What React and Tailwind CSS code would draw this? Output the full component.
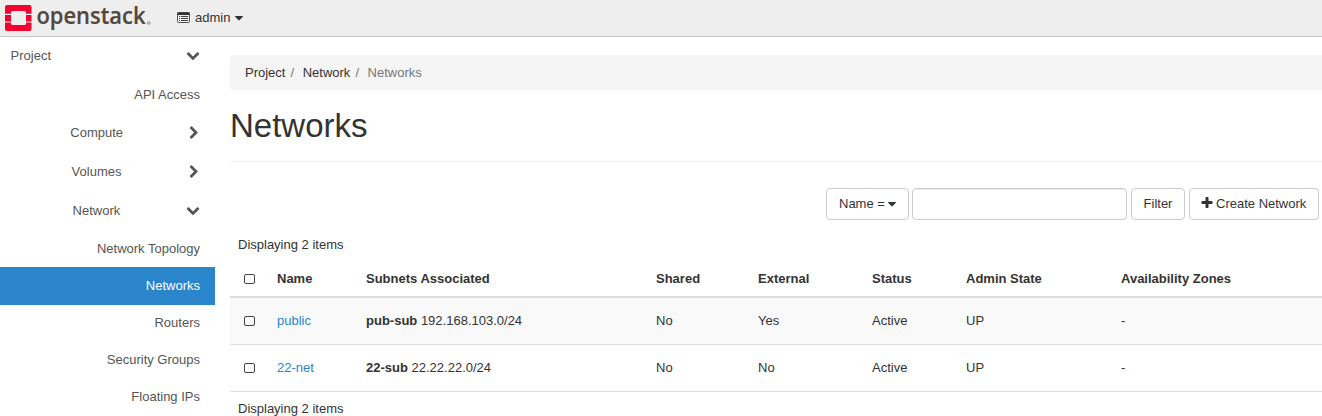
const FA = {
  down: "M1683 808l-742 741q-19 19-45 19t-45-19l-742-741q-19-19-19-45.5t19-45.5l166-165q19-19 45-19t45 19l531 531 531-531q19-19 45-19t45 19l166 165q19 19 19 45.5t-19 45.5z",
  right: "M1363 877l-742 742q-19 19-45 19t-45-19l-166-166q-19-19-19-45t19-45l531-531-531-531q-19-19-19-45t19-45l166-166q19-19 45-19t45 19l742 742q19 19 19 45t-19 45z",
  plus: "M1600 736v192q0 40-28 68t-68 28h-416v416q0 40-28 68t-68 28h-192q-40 0-68-28t-28-68v-416h-416q-40 0-68-28t-28-68v-192q0-40 28-68t68-28h416v-416q0-40 28-68t68-28h192q40 0 68 28t28 68v416h416q40 0 68 28t28 68z",
  caret: "M1408 704q0 26-19 45l-448 448q-19 19-45 19t-45-19l-448-448q-19-19-19-45t19-45 45-19h896q26 0 45 19t19 45z",
};

function Icon({ name, className = "" }) {
  return (
    <svg viewBox="0 0 1792 1792" fill="currentColor" className={`size-[14px] shrink-0 ${className}`}>
      <path d={FA[name]} />
    </svg>
  );
}

function Logo() {
  return (
    <svg width="150" height="36" viewBox="0 0 150 36" className="ml-[2px] shrink-0 overflow-visible">
      <g fill="#f5002f">
        <path d="M5 5h22.5a2 2 0 0 1 2 2v6.7h-5.5v-1.2a1.5 1.5 0 0 0-1.5-1.5h-12a1.5 1.5 0 0 0-1.5 1.5v1.2h-6v-6.7a2 2 0 0 1 2-2z" />
        <path d="M3 14.9h6v6.5h-6zM24 14.9h5.5v6.5h-5.5z" />
        <path d="M3 22.6h6v1a1.5 1.5 0 0 0 1.5 1.5h12a1.5 1.5 0 0 0 1.5-1.5v-1h5.5v6.4a2 2 0 0 1-2 2h-22.5a2 2 0 0 1-2-2z" />
      </g>
      <text x="34.5" y="24" textLength="109" lengthAdjust="spacingAndGlyphs" fill="#53483e" stroke="#53483e" strokeWidth=".2" className="font-['Open_Sans',sans-serif] text-[23.5px] font-semibold">openstack</text>
      <circle cx="146.8" cy="23" r="1.4" fill="#c4c0bd" stroke="#9b948e" strokeWidth=".7" />
    </svg>
  );
}

function ListIcon() {
  return (
    <svg width="13" height="11" viewBox="0 0 13 11" className="mb-px shrink-0">
      <path d="M1.4.5h10.2q.9 0 .9.9v8.2q0 .9-.9.9H1.400q-.9 0-.9-.9V1.400q0-.9.9-.9z" fill="none" stroke="#555" />
      <path d="M.5.5h12V3H.5z" fill="#333" />
      <path d="M2 4h1v1H2zM4 4h7v1H4zM2 6h1v1H2zM4 6h7v1H4zM2 8h1v1H2zM4 8h7v1H4z" fill="#444" />
    </svg>
  );
}

function Group({ label, icon, className }) {
  return (
    <div className={`flex items-center justify-between ${className}`}>
      <span>{label}</span>
      <Icon name={icon} className={icon === "down" ? "mr-[15px] mb-[2px]" : "mr-[14px]"} />
    </div>
  );
}

function Leaf({ label, className }) {
  return <div className={`flex items-center justify-end pr-[15px] ${className}`}>{label}</div>;
}

const Box = () => <span className="block h-[10px] w-[11px] rounded-[2px] border border-[#444]" />;

const columns = "grid grid-cols-[39px_89px_290px_102px_114px_94px_155px_1fr] items-center pl-2";

function Row({ name, subnet, cidr, external, className }) {
  return (
    <div className={`${columns} h-[47px] border-b border-[#ddd] ${className}`}>
      <span className="pl-[6px]"><Box /></span>
      <a className="text-[#2a85cb]">{name}</a>
      <span><b>{subnet}</b> {cidr}</span>
      <span>No</span>
      <span>{external}</span>
      <span>Active</span>
      <span>UP</span>
      <span>-</span>
    </div>
  );
}

const button = "flex h-8 items-center rounded-[4px] border border-[#ccc] bg-white";

export default function App() {
  return (
    <div className="flex h-[416px] w-[1322px] flex-col overflow-hidden bg-white font-['Liberation_Sans',Arial,sans-serif] text-[13px] leading-[18px] text-[#333]">
      <header className="flex h-[37px] shrink-0 items-center border-b border-[#c6c6c6] bg-[#eee]">
        <Logo />
        <div className="ml-[25px] flex items-center">
          <ListIcon />
          <span className="ml-[5px]">admin</span>
          <Icon name="caret" className="mb-px ml-[2px]" />
        </div>
      </header>
      <div className="flex min-h-0 flex-1">
        <nav className="w-[215px] shrink-0 text-[#555]">
          <Group label="Project" icon="down" className="h-[38px] pl-[10.6px]" />
          <Leaf label="API Access" className="h-[39px]" />
          <Group label="Compute" icon="right" className="h-[38px] pl-[70.3px]" />
          <Group label="Volumes" icon="right" className="h-[39px] pl-[71.6px]" />
          <Group label="Network" icon="down" className="h-[39px] pl-[72.6px]" />
          <Leaf label="Network Topology" className="h-[37px]" />
          <Leaf label="Networks" className="h-[38px] bg-[#2a85cb] text-white" />
          <Leaf label="Routers" className="h-[36px]" />
          <Leaf label="Security Groups" className="h-[38px]" />
          <Leaf label="Floating IPs" className="h-[36px]" />
        </nav>
        <main className="ml-[15px] flex-1 pt-[18px]">
          <div className="flex h-[35px] items-center rounded-l-[4px] bg-[#f5f5f5] pl-[15px]">
            <span>Project</span>
            <span className="ml-[5px] text-[#777]">/</span>
            <span className="ml-[8.6px]">Network</span>
            <span className="ml-[5px] text-[#777]">/</span>
            <span className="ml-[8.6px] text-[#777]">Networks</span>
          </div>
          <h1 className="h-[72px] border-b border-[#eee] pt-[18px] text-[33px] leading-[36px]">Networks</h1>
          <div className="mt-[26px] flex justify-end pr-[3px]">
            <div className={`${button} w-[83px] pl-3`}>
              Name =<Icon name="caret" className="mb-px" />
            </div>
            <input className="ml-[3px] h-8 w-[215px] rounded-[4px] border border-[#ccc] inset-shadow-[0_1px_1px_rgba(0,0,0,0.075)] outline-none" />
            <div className={`${button} ml-1 w-[54px] justify-center`}>Filter</div>
            <div className={`${button} ml-1 w-[130px] pl-[10px]`}>
              <Icon name="plus" className="mr-[2px] mb-[2px]" />Create Network
            </div>
          </div>
          <div className="mt-4 pl-2">Displaying 2 items</div>
          <div className={`${columns} mt-[7px] h-[37px] border-b-2 border-[#ddd] font-bold`}>
            <span className="pl-[6px]"><Box /></span>
            <span>Name</span>
            <span>Subnets Associated</span>
            <span>Shared</span>
            <span>External</span>
            <span>Status</span>
            <span>Admin State</span>
            <span>Availability Zones</span>
          </div>
          <Row name="public" subnet="pub-sub" cidr="192.168.103.0/24" external="Yes" className="bg-[#f9f9f9]" />
          <Row name="22-net" subnet="22-sub" cidr="22.22.22.0/24" external="No" className="" />
          <div className="mt-2 pl-2">Displaying 2 items</div>
        </main>
      </div>
    </div>
  );
}
